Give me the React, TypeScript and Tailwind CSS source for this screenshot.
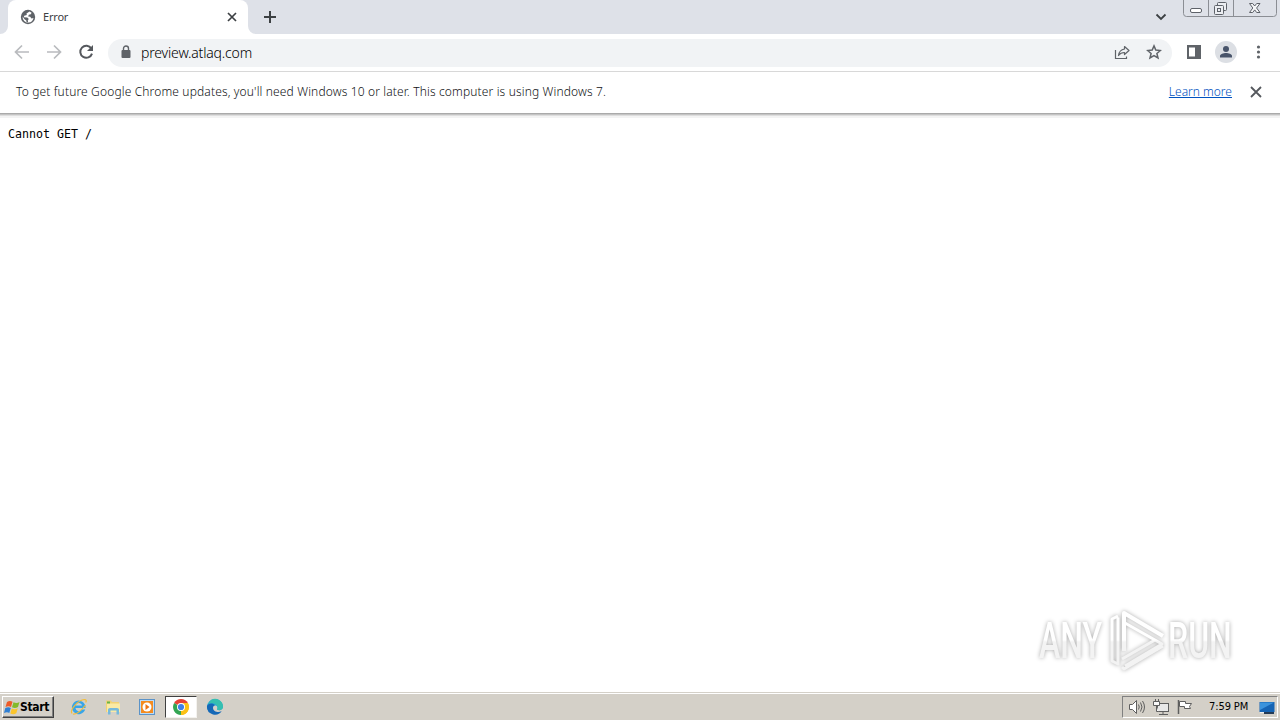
import type { ReactNode } from 'react';

function TabStrip() {
  return (
    <div className="flex h-[34px] items-start bg-[#dee1e8] pl-2">
      <div className="relative flex h-[34px] w-60 items-center rounded-t-lg bg-white pl-3 pr-[10px]">
        <svg className="absolute -left-2 bottom-0" width="8" height="8"><path d="M8 0v8H0a8 8 0 0 0 8-8" fill="#fff" /></svg>
        <svg className="absolute -right-2 bottom-0" width="8" height="8"><path d="M0 0v8h8a8 8 0 0 1-8-8" fill="#fff" /></svg>
        <svg width="16" height="16" viewBox="0 0 16 16">
          <circle cx="8" cy="8" r="7.2" fill="#5f6368" />
          <path d="M9.500 2.500l-3 2 .3 1.500-2.600.8-.4 1.400 3.500.2 1.500 1.600-1 1.300.4 2.700-1.600-.2-.3-2.200-1.800-1.300-1.900-2.700A5.600 5.600 0 0 0 8.500 13.600a5.600 5.600 0 0 0 5-4.600l-2 .4-1.300-1.600-2-.4.6-1.600 2-.6.800-1.500z" fill="#fff" />
        </svg>
        <span className="ml-[7px] flex-1 text-[11px] leading-4 text-[#3c4043]"><span className="tracking-[-0.200px]">Error</span></span>
        <svg width="12" height="12" viewBox="0 0 12 12" stroke="#3c4043" strokeWidth="1.7"><path d="M2 2l8 8M10 2l-8 8" /></svg>
      </div>
      <svg className="ml-4 mt-[11px]" width="12" height="12" stroke="#3c4043" strokeWidth="2"><path d="M0 6h12M6 0v12" /></svg>
      <div className="flex-1" />
      <svg className="mr-4 mt-3" width="12" height="10" fill="none" stroke="#3c4043" strokeWidth="1.8"><path d="M1.5 2.5L6 7l4.5-4.5" /></svg>
      <svg className="mr-[3px]" width="94" height="18" fill="none" stroke="#8b8e94">
        <path d="M.5 0v13.5a3 3 0 0 0 3 3h87a3 3 0 0 0 3-3V0M25.5 0v16.5M50.5 0v16.5" />
        <rect x="7.5" y="8.500" width="11" height="4" rx="1.500" fill="#fff" stroke="#5e6269" />
        <g stroke="#5e6269" fill="#eceef2">
          <rect x="34.5" y="2.500" width="9" height="8" rx="1" />
          <rect x="31.5" y="5.500" width="9" height="9" rx="1" />
          <rect x="34.5" y="8.500" width="3" height="3" />
        </g>
        <path d="M66.500 3.500h3.200l2 2.500 2-2.500h3.300L73.600 8l3.400 4.500h-3.300l-2-2.600-2 2.600h-3.200L69.800 8z" fill="#f5f6f8" stroke="#5e6269" />
      </svg>
    </div>
  );
}

function Toolbar() {
  return (
    <div className="flex h-[38px] items-center border-b border-[#d8d8d8] bg-white px-[14px]">
      <svg className="-mt-[1px]" width="80" height="16" viewBox="0 0 80 16" fill="none" stroke="#b9bbbe" strokeWidth="1.700">
        <path d="M15 8H2M8 1.500L1.500 8 8 14.500M33 8h13M40 1.500L46.500 8 40 14.500" />
        <path d="M77.300 4.400A6 6 0 1 0 78 9.600" stroke="#55585d" strokeWidth="2" />
        <path d="M79 1v6h-6z" fill="#55585d" stroke="none" />
      </svg>
      <div className="ml-[14px] flex h-7 w-[1064px] items-center rounded-full bg-[#f1f3f5] pl-[13px] pr-[10px]">
        <svg className="-mt-[2px]" width="10" height="14" viewBox="0 0 10 14"><rect x=".5" y="5" width="9" height="8" rx="1" fill="#5f6368" /><path d="M2.500 6V3.500a2.500 2.500 0 0 1 5 0V6" fill="none" stroke="#5f6368" strokeWidth="1.400" /></svg>
        <span className="ml-[10px] flex-1 text-[14px] font-light leading-5 tracking-[-0.160px] text-black">preview.atlaq.com</span>
        <svg width="16" height="16" viewBox="0 0 16 16" fill="none" stroke="#5f6368" strokeWidth="1.200">
          <path d="M1.500 5v8.500h11V11.500" />
          <path d="M10.500 1.500l4.500 4-4.500 4v-2c-2.500 0-4.500.8-6 3C5 7 7 4.500 10.500 4z" strokeLinejoin="round" />
        </svg>
        <svg className="ml-4 -mt-[1px]" width="16" height="16" viewBox="0 0 16 16" fill="none" stroke="#5f6368" strokeWidth="1.500"><path d="M8 1.900l1.800 4.200 4.600.4-3.500 3 1.100 4.500L8 11.600 4 14l1.100-4.500-3.500-3 4.600-.4z" /></svg>
      </div>
      <svg className="ml-[14px] -mt-[2px]" width="16" height="16"><path d="M1 1h14v14H1zM3 3.500v9h6v-9z" fill="#5f6368" fillRule="evenodd" /></svg>
      <svg className="ml-[13px] -mt-[1px]" width="22" height="22" viewBox="0 0 22 22"><circle cx="11" cy="11" r="11" fill="#dcdfe4" /><circle cx="11" cy="8" r="3" fill="#48546a" /><path d="M5 16.500v-1.500c0-2 3.500-3 6-3s6 1 6 3v1.500z" fill="#48546a" /></svg>
      <svg className="ml-[19px] -mt-[1px]" width="5" height="16" fill="#5f6368"><circle cx="2.500" cy="3" r="1.600" /><circle cx="2.500" cy="8" r="1.600" /><circle cx="2.500" cy="13" r="1.600" /></svg>
    </div>
  );
}

function InfoBar() {
  return (
    <div className="flex h-[41px] items-center bg-white pb-[1px] pl-4 pr-[18px] text-[12px] leading-4 text-[#101214] shadow-[0_1px_0_#aaa,0_2px_0_#c4c4c4,0_3px_0_#dedede,0_5px_0_#f3f3f3]">
      <span className="flex-1 whitespace-nowrap font-light tracking-[0.145px]">To get future Google Chrome updates, you'll need Windows 10 or later. This computer is using Windows 7.</span>
      <span className="mr-[18px] font-light text-[#0052c0] underline">Learn more</span>
      <svg width="12" height="12" viewBox="0 0 12 12" stroke="#55585d" strokeWidth="1.800"><path d="M1 1l10 10M11 1L1 11" /></svg>
    </div>
  );
}

// translucent play mark between the two words
function Watermark() {
  return (
    <div className="absolute bottom-5 right-10 flex h-16 items-center drop-shadow-[0_0_2px_#aaa]">
      <svg width="204" height="64" viewBox="0 0 204 64" fill="none">
        <defs>
          <linearGradient id="fade" x1="0" y1="0" x2="0" y2="64" gradientUnits="userSpaceOnUse">
            <stop offset=".5" stopColor="#fff" /><stop offset=".53" stopColor="#f3f3f3" /><stop offset="1" stopColor="#f3f3f3" />
          </linearGradient>
        </defs>
        <g fill="url(#fade)" fontFamily="Roboto" fontWeight="500" fontSize="50">
          <text transform="translate(3 0) scale(.64 1)" y="50">ANY</text>
          <text transform="translate(132 0) scale(.64 1)" y="50">RUN</text>
        </g>
        <g stroke="url(#fade)" strokeLinejoin="round">
          <path d="M82 8l-6 3v42l6 3V9.500" strokeWidth="3" />
          <path d="M88 43V5l39 23" strokeWidth="4" />
          <path d="M89 15l37 21-37 22M86 51l33-19M86 59l2 2 39-23" strokeWidth="3" />
        </g>
      </svg>
    </div>
  );
}

function TaskIcon({ children, active }: { children: ReactNode, active?: boolean }) {
  return (
    <div className={`flex h-[22px] w-8 items-center justify-center ${active ? 'border border-b-[#f4f2ee] border-l-[#404040] border-r-[#f4f2ee] border-t-[#404040] bg-white' : ''}`}>
      <svg width="18" height="18" viewBox="0 0 18 18">{children}</svg>
    </div>
  );
}

function Taskbar() {
  return (
    <div className="flex h-7 items-center border-t border-[#d4d0c8] bg-[#d4d0c8] pb-[1px] pr-[2px] shadow-[inset_0_1px_0_#fff]">
      <button className="mt-[2px] ml-[2px] flex h-[22px] w-[52px] items-center border border-b-[#404040] border-l-white border-r-[#404040] border-t-white pl-[1px] shadow-[inset_-1px_-1px_0_#808080]">
        <svg className="shrink-0" width="17" height="17" viewBox="0 0 17 17">
          <path d="M3 3c2-1.500 4-1.200 5.500-.2L7 8C5.500 7 3.500 7 1.500 8z" fill="#ed5b28" />
          <path d="M9.500 3.200c2 1 4 1 6-.2L14 8c-2 1.300-4 1.200-6 .3z" fill="#83ba2b" />
          <path d="M1.300 9c2-1 4-1 5.500 0l-1.500 5C4 13 2 13 0 14z" fill="#2f7fd3" />
          <path d="M7.800 9.400c2 1 4 1 6-.2l-1.500 5c-2 1.300-4 1.200-6 .3z" fill="#fbc52c" />
        </svg>
        <span className="ml-[-1px] font-['DejaVu_Sans_Condensed','DejaVu_Sans',sans-serif] text-[12px] font-bold leading-4 tracking-[-0.300px] text-black">Start</span>
      </button>
      <div className="ml-[9px] mt-[2px] flex gap-[2px]">
        <TaskIcon>
          <path d="M15.500 10H5.500a3.500 3.500 0 0 0 6.500 1.500h3.200A6.800 6.800 0 1 1 15.500 10zM5.600 7.500h6.500c-.7-3.500-5.700-3.500-6.500 0z" fill="#38a5e8" fillRule="evenodd" />
          <path d="M2 15.500C-.5 12 8 2 14.500 1.500c2 0 2 1.500 1.200 3M3 16c3 .5 8-3 12.500-9" stroke="#f3bd38" strokeWidth="1.200" fill="none" />
        </TaskIcon>
        <TaskIcon>
          <path d="M2 2.500h5l1 1.500h7v10H2z" fill="#f1d275" /><path d="M3 5.500h13V14H3z" fill="#faeaa5" />
          <path d="M4 16.500v-5Q4 10 6 10h7q2 0 2 1.500v5h-2.500v-4h-6v4z" fill="#75b9dc" />
          <path d="M3 3.500h3v2H3z" fill="#68b54a" />
        </TaskIcon>
        <TaskIcon>
          <rect x="1.500" y="1.500" width="15" height="15" fill="#bcdcf7" stroke="#5b93c8" /><rect x="3" y="3" width="12" height="12" fill="#f48b1f" />
          <circle cx="9" cy="9" r="4.500" fill="#fff" /><path d="M7.500 6v6l4-3z" fill="#ec7414" />
        </TaskIcon>
        <TaskIcon active>
          <path d="M9 9L2.100 5A8 8 0 0 1 15.900 5z" fill="#e64235" />
          <path d="M9 9l6.900-4A8 8 0 0 1 9 17z" fill="#fbc116" />
          <path d="M9 9v8A8 8 0 0 1 2.100 5z" fill="#33a553" />
          <path d="M9 5h6.900A8 8 0 0 1 9 17l3.500-6z" fill="#fbc116" />
          <circle cx="9" cy="9" r="4" fill="#fff" /><circle cx="9" cy="9" r="3.100" fill="#3f80e8" />
        </TaskIcon>
        <TaskIcon>
          <path d="M1 9a8 8 0 0 1 16 0c0 3-4 4-6 2.500 1-1 1-3.500-1.500-4C6 7 3.500 11 6 14.500 3 14 1 12 1 9z" fill="#27a7d7" />
          <path d="M5 1.900A8 8 0 0 1 17 9c0 3-4 4-6 2.500C13 7 8 4 2 6z" fill="#35bfb0" />
          <path d="M1 8c1-3 6-3.500 8-.7-3 .7-3 6 2.500 6.700 1.500.2 3-.3 4.200-1A8 8 0 0 1 1 8z" fill="#1568b7" />
        </TaskIcon>
      </div>
      <div className="flex-1" />
      <div className="mt-[2px] flex h-[22px] w-[156px] items-center border border-b-white border-l-[#808080] border-r-white border-t-[#808080] pl-[5px]">
        <svg className="shrink-0" width="68" height="18" viewBox="0 0 68 18" fill="none" stroke="#5e5e5e">
          <path d="M1.500 6.500h3l4-4v13l-4-4h-3z" fill="#fff" />
          <path d="M10.500 6.500q1.500 2.500 0 5M12.500 4.500q3 4.500 0 9M14.500 3q4 6 0 12" />
          <rect x="29.500" y="5.500" width="11" height="8" fill="#e8e8e8" /><path d="M35 14v2m-4 .5h9" />
          <path d="M25.500 3.500h6v4h-6zM28.500 7.500v6h2M27.500 1v3M30.500 1v3" fill="#f8f8f8" />
          <path d="M50.500 2v14" strokeWidth="1.500" /><path d="M51.500 3.500h6v2h6l-2 3 1 2h-6v-2h-5z" fill="#fff" />
        </svg>
        <span className="ml-[13px] w-[50px] whitespace-nowrap font-['DejaVu_Sans_Condensed','DejaVu_Sans',sans-serif] text-[11px] leading-4 tracking-[-0.100px] text-black">7:59 PM</span>
        <svg className="shrink-0" width="16" height="15" viewBox="0 0 16 15"><path d="M.5 2h15v10H.5z" fill="#1664b4" /><path d="M1 2.500h14L1 10z" fill="#3b93dc" /><path d="M5 12h10v2H5z" fill="#253b56" /><path d="M1 12h4v1H1z" fill="#eee" /></svg>
      </div>
    </div>
  );
}

export default function App() {
  return (
    <div className="flex h-[720px] w-[1280px] flex-col overflow-hidden bg-white font-['Noto_Sans',sans-serif]">
      <TabStrip />
      <Toolbar />
      <InfoBar />
      <main className="relative flex-1 px-2 pt-[13px]">
        <pre className="font-['DejaVu_Sans_Mono',monospace] text-[11.630px] leading-4 text-black">Cannot GET /</pre>
        <Watermark />
      </main>
      <Taskbar />
    </div>
  );
}
